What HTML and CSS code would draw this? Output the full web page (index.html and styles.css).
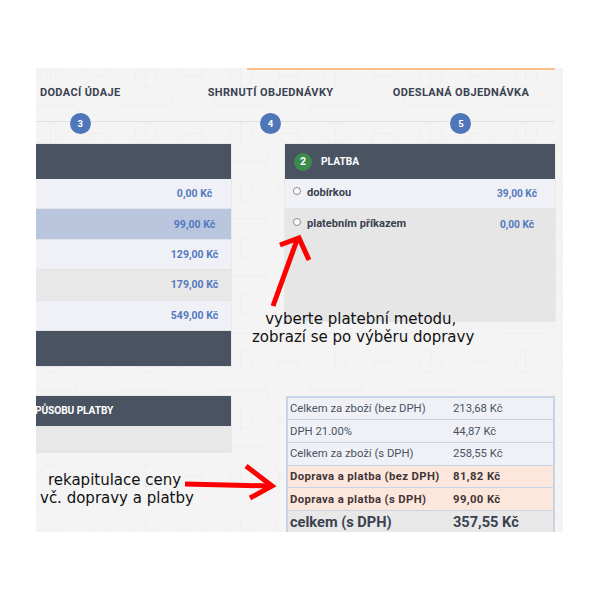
FILE: index.html
```html
<!DOCTYPE html>
<html lang="cs">
<head>
<meta charset="utf-8">
<title>Shrnutí objednávky</title>
<link rel="stylesheet" href="styles.css">
</head>
<body>
<main class="sheet">
  <svg class="backdrop" width="527" height="464" aria-hidden="true">
    <defs>
      <pattern id="hex" width="95" height="57" patternUnits="userSpaceOnUse" x="-25" y="-20">
        <g fill="none" stroke="#eeeeee" stroke-width="1">
          <path d="M0 28.5 16 0H63.5L79.500 28.500 63.500 57H16Z"/>
          <path d="M79.500 28.500H95"/>
          <circle cx="39.750" cy="28.500" r="11"/>
          <path d="M39.750 17.500V39.500"/>
        </g>
      </pattern>
    </defs>
    <rect width="527" height="464" fill="url(#hex)"/>
  </svg>

  <div class="accent"></div>

  <ol class="steps">
    <li class="step"><span class="step-label">DODACÍ ÚDAJE</span><span class="step-num">3</span></li>
    <li class="step"><span class="step-label">SHRNUTÍ OBJEDNÁVKY</span><span class="step-num">4</span></li>
    <li class="step"><span class="step-label">ODESLANÁ OBJEDNÁVKA</span><span class="step-num">5</span></li>
  </ol>

  <div class="columns">
    <div class="col-left">
      <section class="panel">
        <div class="bar"></div>
        <div class="ship-row"><span class="price">0,00 Kč</span></div>
        <div class="ship-row selected"><span class="price">99,00 Kč</span></div>
        <div class="ship-row"><span class="price">129,00 Kč</span></div>
        <div class="ship-row muted"><span class="price">179,00 Kč</span></div>
        <div class="ship-row"><span class="price">549,00 Kč</span></div>
        <div class="bar"></div>
      </section>
      <section class="panel panel-second">
        <div class="bar bar-small"><span class="bar-title">PŮSOBU PLATBY</span></div>
        <div class="ship-row muted short"></div>
      </section>
    </div>

    <div class="col-right">
      <section class="panel">
        <div class="bar bar-pay">
          <span class="badge">2</span>
          <span class="bar-title">PLATBA</span>
        </div>
        <div class="pay-row">
          <span class="radio"></span><span class="pay-name">dobírkou</span><span class="pay-price">39,00 Kč</span>
        </div>
        <div class="pay-row pay-muted">
          <span class="radio"></span><span class="pay-name">platebním příkazem</span><span class="pay-price">0,00 Kč</span>
        </div>
      </section>

      <table class="recap">
        <tr><td>Celkem za zboží (bez DPH)</td><td>213,68 Kč</td></tr>
        <tr><td>DPH 21.00%</td><td>44,87 Kč</td></tr>
        <tr><td>Celkem za zboží (s DPH)</td><td>258,55 Kč</td></tr>
        <tr class="hl"><td>Doprava a platba (bez DPH)</td><td>81,82 Kč</td></tr>
        <tr class="hl"><td>Doprava a platba (s DPH)</td><td>99,00 Kč</td></tr>
        <tr class="total"><td>celkem (s DPH)</td><td>357,55 Kč</td></tr>
      </table>
    </div>
  </div>

  <svg class="arrows" width="527" height="464" aria-hidden="true">
    <g fill="none" stroke="#ff0000" stroke-width="5">
      <path d="M237 238 261 172"/>
      <path d="M244 177 263 170 273 192"/>
      <path d="M149 416 234 418"/>
      <path d="M210 398 236 418 214 430"/>
    </g>
  </svg>
  <p class="note note-pay">vyberte platební metodu,&nbsp;<br>zobrazí se po výběru dopravy</p>
  <p class="note note-recap">rekapitulace ceny&nbsp;<br>vč. dopravy a platby</p>
</main>
</body>
</html>
```

FILE: styles.css
```css
* { box-sizing: border-box; }
html, body { margin: 0; padding: 0; background: #fff; }
body { width: 600px; height: 600px; overflow: hidden; font-family: "Roboto", "Liberation Sans", sans-serif; }

.sheet {
  position: relative;
  width: 527px;
  height: 464px;
  margin: 68px 0 0 36px;
  background: #f4f4f4;
  overflow: hidden;
}
.backdrop, .arrows { position: absolute; left: 0; top: 0; }
.accent {
  position: relative;
  width: 308px;
  height: 2px;
  margin-left: 211px;
  background: #fdc088;
}

.steps {
  position: relative;
  display: grid;
  grid-template-columns: repeat(3, 190.400px);
  width: 570px;
  margin: 0 0 0 -51px;
  padding: 16px 0 0;
  list-style: none;
}
.steps::after {
  content: "";
  position: absolute;
  left: 51px;
  right: 0;
  top: 51px;
  height: 1px;
  background: #e0e0e0;
}
.step { display: flex; flex-direction: column; align-items: center; position: relative; z-index: 1; }
.step-label {
  height: 14px;
  font-size: 11px;
  line-height: 14px;
  font-weight: 700;
  letter-spacing: 0.36px;
  color: #3a4250;
  white-space: nowrap;
}
.step-num {
  width: 21px;
  height: 21px;
  margin-top: 13px;
  border-radius: 50%;
  background: #4f76b9;
  color: #fff;
  font-size: 9.500px;
  font-weight: 700;
  line-height: 21px;
  text-align: center;
}

.columns {
  position: relative;
  display: grid;
  grid-template-columns: 195px 270px;
  column-gap: 54px;
  margin-top: 10px;
}
.panel { box-shadow: 0 0 1px rgba(0,0,0,.25); }
.panel-second { margin-top: 30px; }
.bar { height: 35px; background: #4a5362; }
.bar-small { height: 30px; display: flex; align-items: center; }
.bar-small .bar-title { margin-left: -1px; letter-spacing: -0.1px; }
.bar-pay { display: flex; align-items: center; padding-left: 9px; }
.badge {
  width: 18px;
  height: 18px;
  border-radius: 50%;
  background: #3c8b4c;
  color: #fff;
  font-size: 10.500px;
  font-weight: 700;
  line-height: 18px;
  text-align: center;
}
.bar-title { margin-left: 9px; color: #fff; font-size: 10.200px; font-weight: 700; white-space: nowrap; }

.ship-row {
  display: grid;
  grid-template-columns: 1fr 73px;
  align-items: center;
  height: 30.400px;
  background: #f0f1f6;
  border-bottom: 1px solid #e4e4e6;
}
.ship-row.selected { background: #b9c6de; }
.ship-row.muted { background: #e8e8e8; }
.ship-row.short { height: 26px; }
.price {
  grid-column: 2;
  text-align: center;
  font-size: 10.500px;
  font-weight: 700;
  color: #5279bf;
  white-space: nowrap;
}

.pay-row {
  display: grid;
  grid-template-columns: 8px 1fr 76px;
  align-items: start;
  column-gap: 6px;
  height: 30px;
  padding: 7px 0 0 8px;
  background: #f0f1f6;
  border-bottom: 1px solid #e4e4e6;
}
.pay-row.pay-muted { height: 112px; padding-top: 8px; background: #e6e6e6; }
.radio {
  width: 8px;
  height: 8px;
  margin-top: 1px;
  border: 1px solid #8a8a8a;
  border-radius: 50%;
  background: #fff;
}
.pay-name { font-size: 11.100px; line-height: 13px; font-weight: 700; color: #3a4250; }
.pay-price { text-align: center; font-size: 10.200px; line-height: 15px; font-weight: 700; color: #5279bf; }

.recap {
  width: 269px;
  margin: 75px 0 0 1px;
  border-collapse: collapse;
  table-layout: fixed;
  color: #4a5362;
  font-size: 11.300px;
  border-top: 2px solid #c9d3e6;
  border-left: 2px solid #c9d3e6;
  border-right: 2px solid #c9d3e6;
}
.recap tr { height: 22.700px; background: #f0f1f6; border-bottom: 1px solid #c9d3e6; }
.recap td { padding: 0 0 0 2px; white-space: nowrap; }
.recap td:first-child { width: 164px; }
.recap .hl { background: #fde6dc; font-weight: 700; color: #3f3638; letter-spacing: 0.4px; }
.recap .total { background: #e8e8e8; height: 22px; font-size: 14.600px; font-weight: 700; color: #3a4250; border-bottom: 0; letter-spacing: 0; }

.note {
  position: absolute;
  margin: 0;
  font-family: "DejaVu Sans", sans-serif;
  font-size: 15px;
  line-height: 18px;
  color: #111;
  text-align: center;
  white-space: nowrap;
}
.note-pay { left: 216px; top: 242px; }
.note-recap { left: 4px; top: 403px; }
```
